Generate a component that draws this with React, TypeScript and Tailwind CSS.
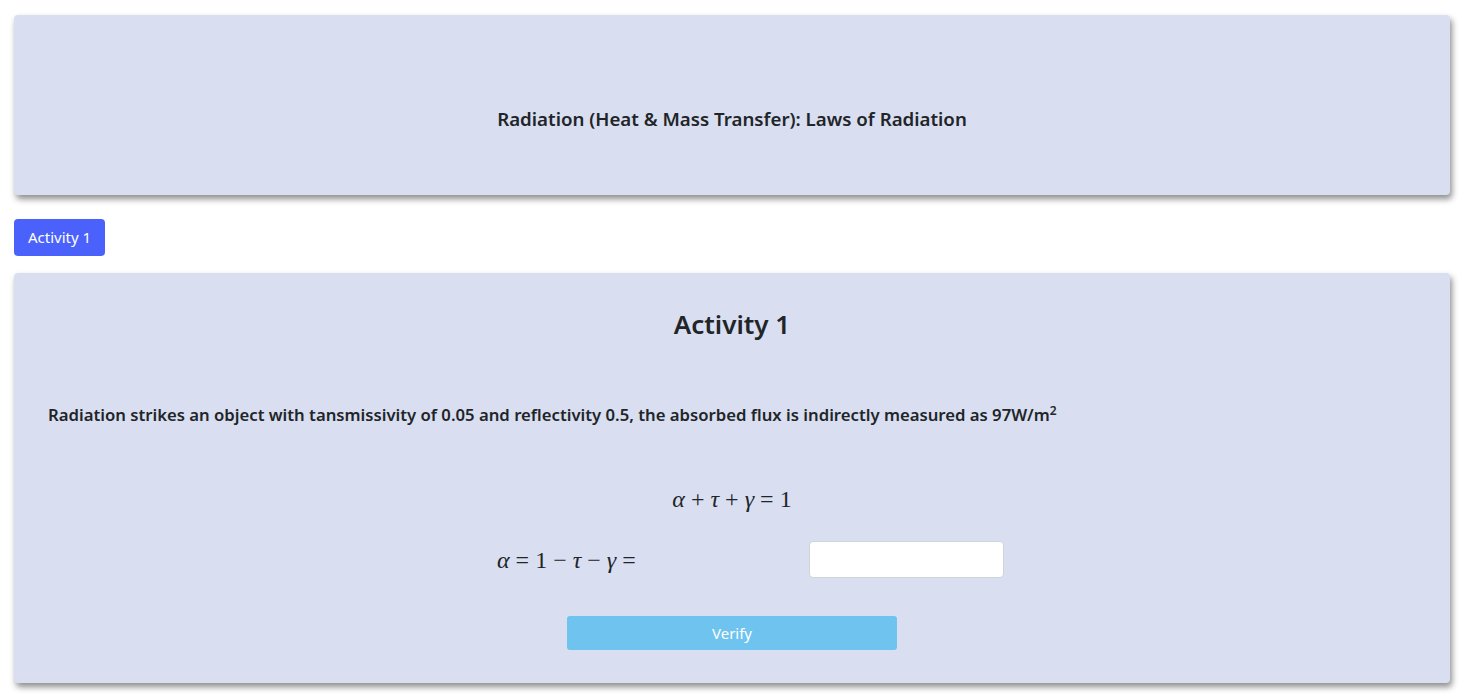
import React, { useState } from 'react';

const font = { fontFamily: '"Noto Sans", "Open Sans", sans-serif' };
const mathFont = { fontFamily: '"Liberation Serif", "DejaVu Serif", serif' };

const MathVar: React.FC<{ children: React.ReactNode }> = ({ children }) => (
  <span className="italic">{children}</span>
);

const Op: React.FC<{ children: React.ReactNode }> = ({ children }) => (
  <span className="mx-[6px]">{children}</span>
);

export default function App() {
  const [value, setValue] = useState('');

  return (
    <div className="min-h-screen bg-white px-[14px] pt-[15px] text-[#212529]" style={font}>
      {/* Title card */}
      <div className="h-[180px] rounded-[4px] bg-[#d9dff0] shadow-[2px_4px_6px_rgba(0,0,0,0.45)] flex items-center justify-center pt-[28px]">
        <h1 className="text-[18.7px] font-semibold">
          Radiation (Heat &amp; Mass Transfer): Laws of Radiation
        </h1>
      </div>

      {/* Tabs */}
      <div className="mt-[24px] flex">
        <button className="h-[37px] w-[91px] rounded-[4px] bg-[#4a62fb] text-[15px] text-white">
          Activity 1
        </button>
      </div>

      {/* Activity card */}
      <div className="mt-[17px] h-[410px] rounded-[4px] bg-[#d9dff0] shadow-[2px_4px_6px_rgba(0,0,0,0.45)] px-[34px] pt-[35px]">
        <h2 className="text-center text-[26px] font-semibold leading-[32px]">Activity 1</h2>

        <p className="mt-[63px] text-[16.7px] font-semibold leading-[24px]">
          Radiation strikes an object with tansmissivity of 0.05 and reflectivity 0.5, the absorbed flux is indirectly measured as 97W/m
          <sup className="text-[12px]">2</sup>
        </p>

        <div className="mt-[60px] flex justify-center text-[24px] leading-[24px]" style={mathFont}>
          <span>
            <MathVar>α</MathVar>
            <Op>+</Op>
            <MathVar>τ</MathVar>
            <Op>+</Op>
            <MathVar>γ</MathVar>
            <Op>=</Op>1
          </span>
        </div>

        <div className="mt-[30px] flex justify-center pl-[37px]">
          <div className="w-[312px] flex items-center text-[24px]" style={mathFont}>
            <MathVar>α</MathVar>
            <Op>=</Op>1<Op>−</Op>
            <MathVar>τ</MathVar>
            <Op>−</Op>
            <MathVar>γ</MathVar>
            <Op>=</Op>
          </div>
          <input
            value={value}
            onChange={(e) => setValue(e.target.value)}
            className="h-[37px] w-[195px] rounded-[4px] border border-[#ced4da] bg-white px-3 outline-none"
          />
        </div>

        <div className="mt-[38px] flex justify-center">
          <button className="h-[34px] w-[330px] rounded-[3px] bg-[#6ec4ee] text-[15px] text-white">
            Verify
          </button>
        </div>
      </div>
    </div>
  );
}
